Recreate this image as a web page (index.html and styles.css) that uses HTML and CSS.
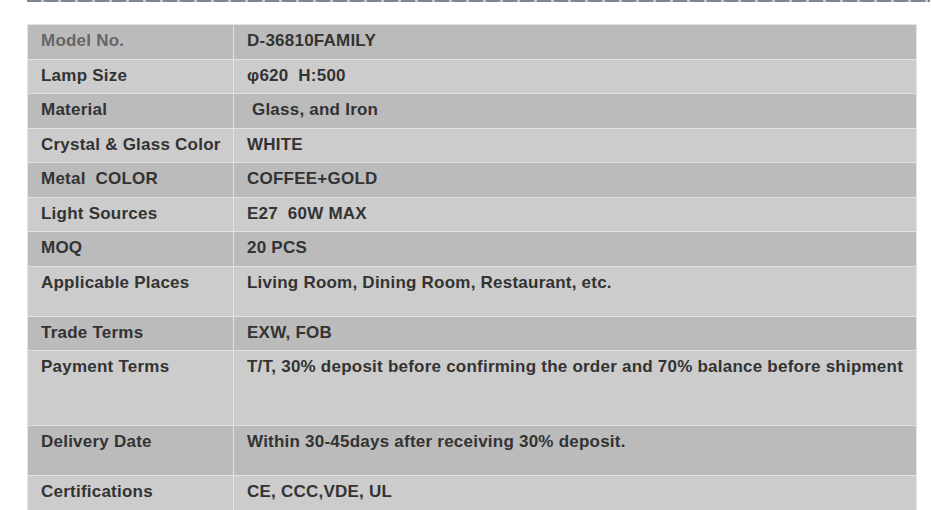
FILE: index.html
```html
<!DOCTYPE html>
<html>
<head>
<meta charset="utf-8">
<link rel="stylesheet" href="styles.css">
</head>
<body>
<div class="page">
  <div class="rule"></div>
  <table class="spec">
    <tbody>
      <tr class="dark"><td class="key muted">Model No.</td><td>D-36810FAMILY</td></tr>
      <tr class="light"><td class="key">Lamp Size</td><td>φ620&nbsp; H:500</td></tr>
      <tr class="dark"><td class="key">Material</td><td>&nbsp;Glass, and Iron</td></tr>
      <tr class="light"><td class="key">Crystal &amp; Glass Color</td><td>WHITE</td></tr>
      <tr class="dark"><td class="key">Metal&nbsp; COLOR</td><td>COFFEE+GOLD</td></tr>
      <tr class="light"><td class="key">Light Sources</td><td>E27&nbsp; 60W MAX</td></tr>
      <tr class="dark"><td class="key">MOQ</td><td>20 PCS</td></tr>
      <tr class="light tall-1"><td class="key">Applicable Places</td><td>Living Room, Dining Room, Restaurant, etc.</td></tr>
      <tr class="dark"><td class="key">Trade Terms</td><td>EXW, FOB</td></tr>
      <tr class="light tall-2"><td class="key">Payment Terms</td><td>T/T, 30% deposit before confirming the order and 70% balance before shipment</td></tr>
      <tr class="dark tall-1"><td class="key">Delivery Date</td><td>Within 30-45days after receiving 30% deposit.</td></tr>
      <tr class="light"><td class="key">Certifications</td><td>CE, CCC,VDE, UL</td></tr>
    </tbody>
  </table>
</div>
</body>
</html>
```

FILE: styles.css
```css
html, body {
  margin: 0;
  padding: 0;
  background: #ffffff;
}

.page {
  padding-left: 27px;
  font-family: "Liberation Sans", Arial, sans-serif;
}

.rule {
  height: 2px;
  width: 903px;
  background: repeating-linear-gradient(90deg, #7d8590 0 14px, #c3c7cd 14px 17px);
  margin-bottom: 22px;
}

.spec {
  border-collapse: collapse;
  width: 890px;
  border: 1px solid #dedede;
  font-size: 17px;
  font-weight: bold;
  letter-spacing: 0.23px;
  color: #333333;
}

.spec td {
  border: 1px solid #e2e2e2;
  padding: 6px 10px 8px 13px;
  line-height: 19.5px;
  vertical-align: top;
  white-space: nowrap;
}

.spec td.key {
  width: 182px;
}

.spec .muted {
  color: #666666;
}

.dark td {
  background: #bbbbbb;
}

.light td {
  background: #cccccc;
}

.tall-1 {
  height: 50px;
}

.tall-2 {
  height: 75px;
}
```
